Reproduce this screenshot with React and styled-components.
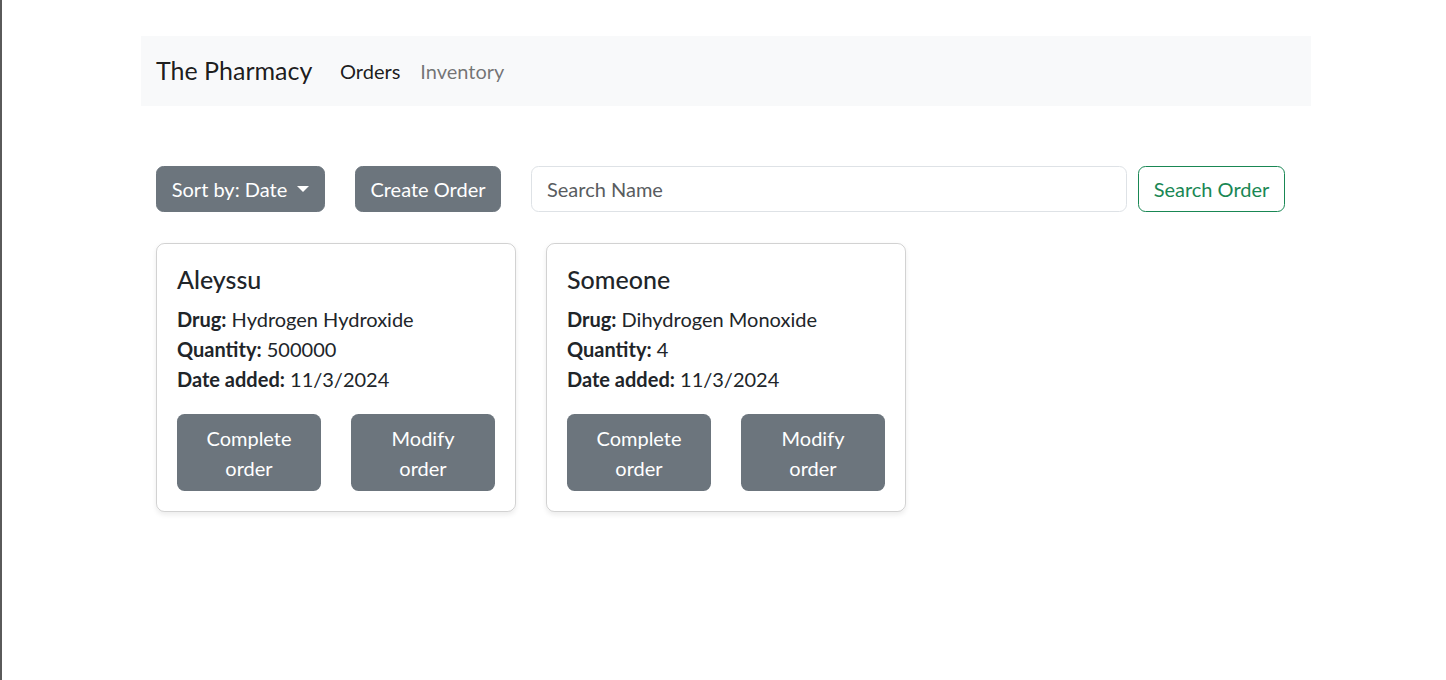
import React from 'react';
import styled, { createGlobalStyle } from 'styled-components';

const GlobalStyle = createGlobalStyle`
    body {
        margin: 0;
        font-family: Lato, "Noto Sans", sans-serif;
        color: #212529;
        background: #fff;
    }
    * { box-sizing: border-box; }
`

const orders = [
    { name: 'Aleyssu', drug: 'Hydrogen Hydroxide', quantity: 500000, date: '11/3/2024' },
    { name: 'Someone', drug: 'Dihydrogen Monoxide', quantity: 4, date: '11/3/2024' },
]

export default function App() {
    return (
        <Page>
            <GlobalStyle />
            <Container>
                <NavBar>
                    <Brand>The Pharmacy</Brand>
                    <NavLink active>Orders</NavLink>
                    <NavLink>Inventory</NavLink>
                </NavBar>

                <Main>
                    <Toolbar>
                        <GrayButton width={169}>
                            Sort by: Date <Caret />
                        </GrayButton>
                        <GrayButton width={146}>Create Order</GrayButton>
                        <SearchForm onSubmit={e => e.preventDefault()}>
                            <SearchInput placeholder="Search Name" />
                            <OutlineButton type="submit">Search Order</OutlineButton>
                        </SearchForm>
                    </Toolbar>

                    <CardList>
                        {orders.map(order => (
                            <Card key={order.name}>
                                <CardTitle>{order.name}</CardTitle>
                                <CardText>
                                    <b>Drug:</b> {order.drug}<br />
                                    <b>Quantity:</b> {order.quantity}<br />
                                    <b>Date added:</b> {order.date}
                                </CardText>
                                <CardActions>
                                    <CardButton>Complete order</CardButton>
                                    <CardButton>Modify order</CardButton>
                                </CardActions>
                            </Card>
                        ))}
                    </CardList>
                </Main>
            </Container>
        </Page>
    )
}

const Page = styled.div`
    min-height: 100vh;
    border-left: 2px solid #5a5a5a;
    padding-top: 36px;
`

const Container = styled.div`
    width: 1170px;
    margin-left: 139px;
`

const NavBar = styled.nav`
    height: 70px;
    background-color: #f8f9fa;
    display: flex;
    align-items: center;
    padding: 0 15px;
`

const Brand = styled.div`
    width: 154px;
    font-size: 25px;
    line-height: 1.5;
    color: rgba(0, 0, 0, 0.9);
    margin-right: 20px;
    white-space: nowrap;
`

const NavLink = styled.a`
    font-size: 20px;
    line-height: 1.5;
    padding: 10px;
    color: ${props => props.active ? 'rgba(0, 0, 0, 0.9)' : 'rgba(0, 0, 0, 0.55)'};
    cursor: pointer;
`

const Main = styled.div`
    padding: 60px 15px 0;
`

const Toolbar = styled.div`
    display: flex;
    align-items: center;
    gap: 30px;
`

const GrayButton = styled.button`
    width: ${props => props.width}px;
    height: 46px;
    font-family: inherit;
    font-size: 20px;
    line-height: 30px;
    color: #fff;
    background-color: #6c757d;
    border: 1px solid #6c757d;
    border-radius: 7.5px;
    padding: 0;
    display: inline-flex;
    align-items: center;
    justify-content: center;
    white-space: nowrap;
`

const Caret = styled.span`
    display: inline-block;
    margin-left: 10px;
    border-top: 6px solid #fff;
    border-left: 6px solid transparent;
    border-right: 6px solid transparent;
`

const SearchForm = styled.form`
    flex: 1;
    display: flex;
    gap: 11px;
    margin-right: 11px;
`

const SearchInput = styled.input`
    flex: 1;
    height: 46px;
    font-family: inherit;
    font-size: 20px;
    line-height: 30px;
    padding: 7px 15px;
    border: 1px solid #dee2e6;
    border-radius: 7.5px;
    color: #212529;
    outline: none;

    &::placeholder {
        color: #595c5f;
    }
`

const OutlineButton = styled.button`
    width: 147px;
    height: 46px;
    font-family: inherit;
    font-size: 20px;
    line-height: 30px;
    color: #198754;
    background: #fff;
    border: 1px solid #198754;
    border-radius: 7.5px;
    padding: 0;
    white-space: nowrap;
`

const CardList = styled.div`
    display: flex;
    gap: 30px;
    margin-top: 31px;
`

const Card = styled.div`
    width: 360px;
    padding: 20px;
    border: 1px solid rgba(0, 0, 0, 0.175);
    border-radius: 8.5px;
    box-shadow: 0 2.5px 5px rgba(0, 0, 0, 0.075);
`

const CardTitle = styled.h5`
    margin: 0 0 10px;
    font-size: 25px;
    font-weight: 500;
    line-height: 30px;
`

const CardText = styled.p`
    margin: 0 0 20px;
    font-size: 20px;
    line-height: 30px;

    b { font-weight: 700; }
`

const CardActions = styled.div`
    display: flex;
    justify-content: space-between;
`

const CardButton = styled.button`
    width: 144px;
    height: 77px;
    font-family: inherit;
    font-size: 20px;
    line-height: 30px;
    color: #fff;
    background-color: #6c757d;
    border: none;
    border-radius: 7.5px;
    padding: 7px 20px;
`
